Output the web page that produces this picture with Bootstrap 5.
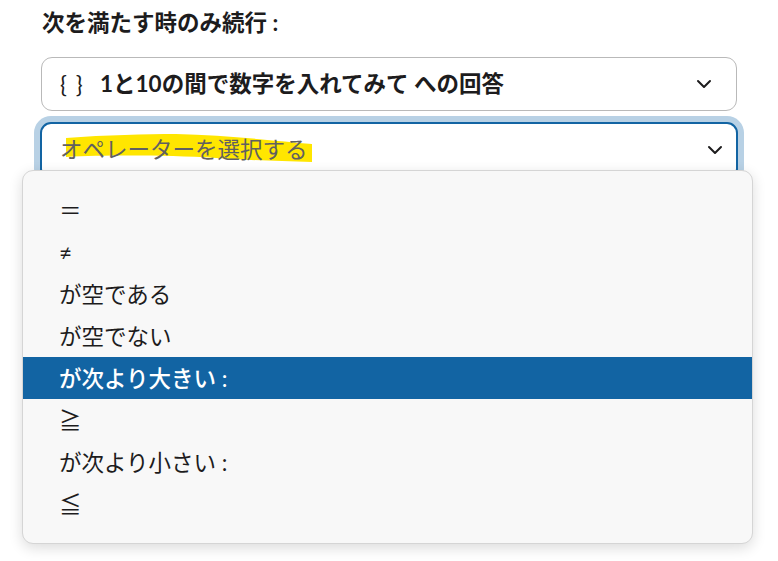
<!DOCTYPE html>
<html lang="ja">
<head>
<meta charset="utf-8">
<title>条件</title>
<link href="https://cdn.jsdelivr.net/npm/bootstrap@5.3.0/dist/css/bootstrap.min.css" rel="stylesheet">
<style>
html,body{height:100%;overflow:hidden;background:#fff}
body{font-family:Lato,"Noto Sans CJK JP",sans-serif;color:#1d1c1d;font-size:22.5px}
.stage{position:relative;padding:9px 40px 0 41px;height:561px}
.cond-label{font-size:22.5px;font-weight:700;line-height:28px;margin-bottom:20px;padding-left:1px}
.sel-box{display:flex;align-items:center;height:54px;border:1px solid #b9b9b9;border-radius:11px;padding:0 24px 0 18px;background:#fff}
.sel-box.first{width:696px}
.brace{font-size:23px;font-weight:400;width:40px;line-height:1;white-space:nowrap;word-spacing:3px}
.sel-value{font-weight:700;font-size:22.5px;line-height:28px}
.chev{flex:none;width:16px;height:10px;margin-left:auto}
.sel-box.focused{width:698px;margin-top:11px;margin-left:-1px;height:58px;border:2px solid #1264a3;box-shadow:0 0 0 6px #b8d1e5;padding:0 13px 2px 18px;position:relative}
.ph{position:relative;font-size:22.5px;color:#616061;line-height:28px;white-space:nowrap}
.mark-svg{position:absolute;left:6px;top:-3px;width:246px;height:30px;z-index:0}
.ph-txt{position:relative;z-index:1}
.op-menu{position:absolute;left:22px;top:170px;width:731px;height:374px;background:#f8f8f8;border:1px solid #d5d5d5;border-radius:11px;padding:18px 0;box-shadow:0 4px 14px rgba(0,0,0,.14);margin:0;list-style:none;z-index:5}
.op-item{height:42px;line-height:44px;padding-left:36px;white-space:nowrap;overflow:hidden}
.op-item.active-op{background:#1264a3;color:#fff;font-weight:500}
</style>
</head>
<body>
<div class="stage">
  <div class="cond-label">次を満たす時のみ続行 :</div>
  <div class="sel-box first">
    <span class="brace">{ }</span>
    <span class="sel-value">1と10の間で数字を入れてみて への回答</span>
    <svg class="chev" viewBox="0 0 16 10" aria-hidden="true"><path d="M2 2l6 6 6-6" fill="none" stroke="#1d1c1d" stroke-width="2" stroke-linecap="round" stroke-linejoin="round"/></svg>
  </div>
  <div class="sel-box focused">
    <span class="ph">
      <svg class="mark-svg" viewBox="0 0 246 30" aria-hidden="true"><path d="M0 5C40 2 80 1 110 1C160 2 210 8 246 11L246 29C210 28 180 27 150 25C100 22 40 22 0 24Z" fill="#ffe600"/></svg>
      <span class="ph-txt">オペレーターを選択する</span>
    </span>
    <svg class="chev" viewBox="0 0 16 10" aria-hidden="true"><path d="M2 2l6 6 6-6" fill="none" stroke="#1d1c1d" stroke-width="2" stroke-linecap="round" stroke-linejoin="round"/></svg>
  </div>
  <ul class="op-menu">
    <li class="op-item">＝</li>
    <li class="op-item">≠</li>
    <li class="op-item">が空である</li>
    <li class="op-item">が空でない</li>
    <li class="op-item active-op">が次より大きい :</li>
    <li class="op-item">≧</li>
    <li class="op-item">が次より小さい :</li>
    <li class="op-item">≦</li>
  </ul>
</div>
<script src="https://cdn.jsdelivr.net/npm/bootstrap@5.3.0/dist/js/bootstrap.bundle.min.js"></script>
</body>
</html>
